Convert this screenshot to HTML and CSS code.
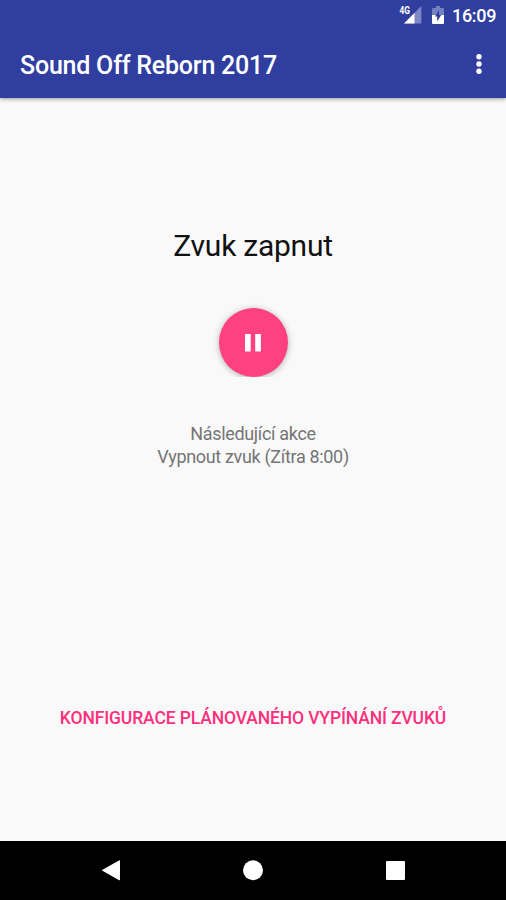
FILE: index.html
```html
<!DOCTYPE html>
<html lang="cs">
<head>
<meta charset="utf-8">
<title>Sound Off Reborn 2017</title>
<link rel="stylesheet" href="styles.css">
</head>
<body>
<div class="screen">
  <header class="header">
    <div class="status">
      <svg class="signal" width="23" height="18" viewBox="0 0 23 18">
        <path d="M5 17.500 22.300 0V17.500Z" fill="#7d87c3"/>
        <path d="M5 17.500 15.500 7V17.500Z" fill="#fff"/>
        <path d="M0 0h12v8.500H0Z" fill="#303f9f"/>
        <text class="network" x="0.500" y="8" textLength="10.500" lengthAdjust="spacingAndGlyphs">4G</text>
      </svg>
      <svg class="battery" width="12" height="18" viewBox="0 0 12 18">
        <path d="M4 0h4v2h3q1 0 1 1v6H0V3q0-1 1-1h3Z" fill="#7580c0"/>
        <path d="M0 9h12v8q0 1-1 1H1q-1 0-1-1Z" fill="#fff"/>
        <path d="M7 4 3 10.500H5.200V15.500l4-6.500H7Z" fill="#303f9f"/>
      </svg>
      <span class="clock">16:09</span>
    </div>
    <div class="toolbar">
      <h1 class="title">Sound Off Reborn 2017</h1>
      <svg class="more" width="6" height="22" viewBox="0 0 6 22" fill="#fff"><circle cx="3" cy="3.700" r="2.700"/><circle cx="3" cy="11" r="2.700"/><circle cx="3" cy="18.300" r="2.700"/></svg>
    </div>
  </header>
  <main class="content">
    <h2 class="state">Zvuk zapnut</h2>
    <button class="pause" aria-label="Pozastavit"><svg width="16" height="18" viewBox="0 0 16 18" fill="#fff"><path d="M0 0h5.700v17.500H0ZM10.200 0h5.700v17.500h-5.700Z"/></svg></button>
    <p class="next">Následující akce<br>Vypnout zvuk (Zítra 8:00)</p>
    <button class="configure">KONFIGURACE PLÁNOVANÉHO VYPÍNÁNÍ ZVUKŮ</button>
  </main>
  <nav class="navbar">
    <svg width="20" height="22" viewBox="0 0 20 22"><path d="M1.500 11.300 18.500 1.700V20.900Z" fill="#fff" stroke="#fff" stroke-linejoin="round"/></svg>
    <svg width="20" height="22" viewBox="0 0 20 22"><circle cx="10" cy="11.300" r="10" fill="#fff"/></svg>
    <svg width="20" height="22" viewBox="0 0 20 22"><rect x="1" y="2" width="19" height="19" rx="1" fill="#fff"/></svg>
  </nav>
</div>
</body>
</html>
```
FILE: styles.css
```css
* { box-sizing: border-box; }
body { margin: 0; font-family: Roboto, sans-serif; }
h1, h2, p { margin: 0; }
button { border: 0; padding: 0; font-family: inherit; }
.screen { width: 506px; height: 900px; display: flex; flex-direction: column; background: #f9f9f9; }
.header { height: 98px; background: #303f9f; color: #fff; box-shadow: 0 1px 4px rgba(0,0,0,.4); }
.status { height: 30px; display: flex; justify-content: flex-end; align-items: center; padding-right: 10px; }
.signal { margin-right: 10px; }
.network { font-size: 10px; font-weight: 700; fill: #fff; }
.battery { margin-right: 8px; }
.clock { width: 44px; padding-top: 1px; font-size: 18px; font-weight: 500; letter-spacing: -.3px; white-space: nowrap; }
.toolbar { height: 68px; display: flex; justify-content: space-between; align-items: center; padding: 0 24px 0 20px; }
.title { padding-top: 3px; font-size: 25px; font-weight: 500; line-height: 30px; letter-spacing: -.22px; }
.content { flex: 1; display: flex; flex-direction: column; align-items: center; }
.state { margin-top: 130px; font-size: 30px; line-height: 36px; font-weight: 400; letter-spacing: -.25px; color: #111; }
.pause { margin-top: 44px; width: 69px; height: 69px; border-radius: 50%; background: #ff4081; display: flex; justify-content: center; align-items: center; box-shadow: 0 1px 6px rgba(0,0,0,.3); clip-path: inset(-8px -8px 0); }
.next { margin-top: 45px; text-align: center; font-size: 18px; line-height: 23px; letter-spacing: -.33px; color: #757575; }
.configure { margin-top: 238px; background: none; color: #ff2f7c; font-size: 17.500px; font-weight: 500; line-height: 24px; letter-spacing: -.13px; white-space: nowrap; }
.navbar { height: 59px; padding-bottom: 1px; background: #000; display: flex; align-items: center; justify-content: center; gap: 122px; }
```
